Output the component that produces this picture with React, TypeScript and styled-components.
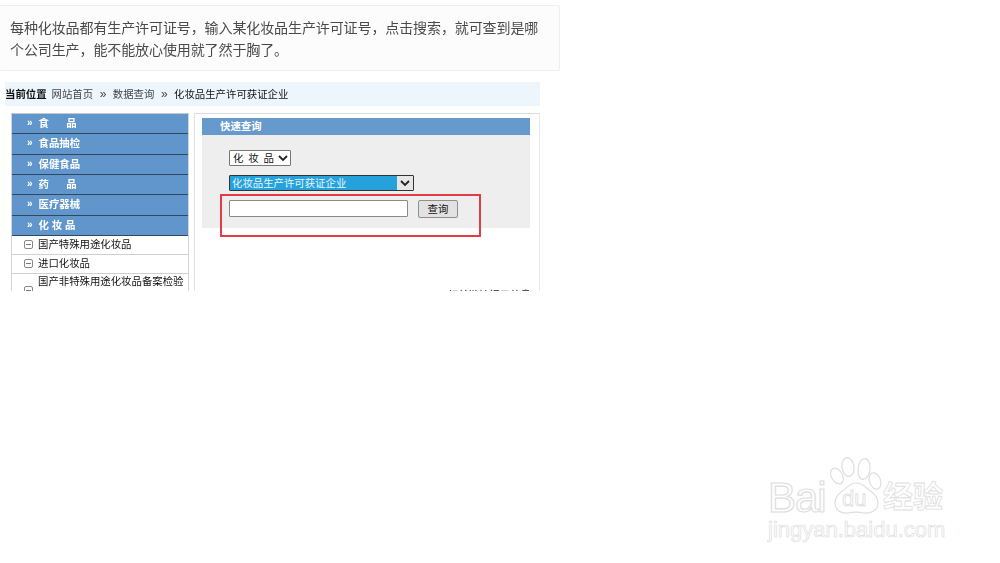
import React from 'react';
import styled, { createGlobalStyle } from 'styled-components';

const GlobalStyle = createGlobalStyle`
    html, body {
        margin: 0;
        padding: 0;
        background: #fff;
    }
    body {
        font-family: "Liberation Sans", "Noto Sans CJK SC", sans-serif;
    }
`
const Page = styled.div`
    position: relative;
    width: 1000px;
    height: 563px;
    overflow: hidden;
    padding-top: 5px;
    box-sizing: border-box;
`
const Note = styled.div`
    width: 560px;
    height: 66px;
    box-sizing: border-box;
    padding: 12px 10px 0 10px;
    background: #fcfcfc;
    border: 1px solid #eeeeee;
    border-left: none;
    border-radius: 2px;
    color: #4a4a4a;
    font-size: 14px;
    line-height: 21.5px;
    letter-spacing: -0.1px;
    filter: blur(0.35px);
`
const Shot = styled.div`
    position: relative;
    width: 535px;
    height: 209px;
    margin: 11px 0 0 5px;
    overflow: hidden;
    font-size: 10.4px;
    filter: blur(0.4px);
`
const Crumbs = styled.div`
    display: flex;
    align-items: center;
    height: 24px;
    padding-bottom: 1px;
    box-sizing: border-box;
    background: #eef6fd;
    color: #444;
`
const CrumbLabel = styled.span`
    color: #111;
    font-weight: 700;
    margin-right: 5px;
`
const CrumbSep = styled.span`
    margin: 0 6.5px;
    font-size: 12px;
`
const CrumbCurrent = styled.span`
    color: #111;
`
const Columns = styled.div`
    display: flex;
    align-items: flex-start;
    height: 185px;
    padding: 7px 0 0 6px;
    box-sizing: border-box;
`
const Sidebar = styled.div`
    width: 178px;
    height: 178px;
    flex-shrink: 0;
    border-top: 1px solid #c8c8c8;
    border-left: 1px solid #d4d4d4;
    border-right: 1px solid #d4d4d4;
    box-sizing: border-box;
`
const NavHead = styled.div`
    display: flex;
    align-items: center;
    box-sizing: border-box;
    height: 20.33px;
    padding: 0 0 2px 15px;
    background: #6096cc;
    border-bottom: 1.5px solid #33485e;
    color: #fff;
    font-weight: 700;
    white-space: pre;
`
const Chevrons = styled.span`
    font-size: 10px;
    margin-right: 6px;
`
const NavItem = styled.div<{ $tall?: boolean }>`
    display: flex;
    align-items: center;
    gap: 5px;
    box-sizing: border-box;
    height: ${(props) => (props.$tall ? '34px' : '19px')};
    padding-left: 12px;
    border-bottom: 1.5px solid #d0d0d0;
    background: #fff;
    color: #111;
    line-height: 16px;
`
const PlusBox = styled.span`
    width: 7px;
    height: 7px;
    border: 1px solid #888;
    border-radius: 2px;
    flex-shrink: 0;
    display: flex;
    align-items: center;
    justify-content: center;
    &::before {
        content: '';
        width: 5px;
        height: 1px;
        background: #777;
    }
`
const Main = styled.div`
    width: 346px;
    height: 178px;
    margin-left: 5px;
    padding: 4px 9px 0 7px;
    box-sizing: border-box;
    border-top: 1px solid #dddddd;
    border-left: 1px solid #e2e2e2;
    border-right: 1px solid #e8e8e8;
    position: relative;
    flex-shrink: 0;
`
const PanelTitle = styled.div`
    display: flex;
    align-items: center;
    height: 17px;
    padding: 0 0 2px 18px;
    box-sizing: border-box;
    background: #6699cc;
    color: #fff;
    font-weight: 700;
`
const PanelBody = styled.div`
    height: 93px;
    padding: 15px 0 0 27px;
    box-sizing: border-box;
    background: #eeeeee;
`
const Field = styled.div<{ $width: number; $dark?: boolean }>`
    display: flex;
    align-items: center;
    justify-content: space-between;
    width: ${(props) => props.$width}px;
    height: 16px;
    box-sizing: border-box;
    background: #fff;
    border: 1px solid ${(props) => (props.$dark ? '#333' : '#777')};
    border-radius: 1px;
    color: #111;
    margin-bottom: 9px;
`
const FieldText = styled.span`
    padding: 0 0 1px 3px;
    letter-spacing: 1px;
    white-space: nowrap;
`
const SelectedText = styled.span`
    display: flex;
    align-items: center;
    flex: 1;
    height: 100%;
    padding: 0 0 1px 2px;
    box-sizing: border-box;
    background: #25a1dc;
    color: #e8f6fd;
    white-space: nowrap;
`
const Arrow = styled.svg<{ $shaded?: boolean }>`
    width: ${(props) => (props.$shaded ? 16 : 14)}px;
    height: 14px;
    flex-shrink: 0;
    background: ${(props) => (props.$shaded ? '#e6e6e6' : 'transparent')};
`
const SearchRow = styled.div`
    display: flex;
    align-items: flex-start;
    gap: 10px;
`
const SearchInput = styled.div`
    width: 179px;
    height: 17px;
    box-sizing: border-box;
    background: #fff;
    border: 1px solid #8a8a8a;
    border-radius: 1px;
`
const SearchButton = styled.div`
    display: flex;
    align-items: center;
    justify-content: center;
    width: 40px;
    height: 18px;
    padding-bottom: 1px;
    box-sizing: border-box;
    background: #e2e2e2;
    border: 1px solid #8f8f8f;
    border-radius: 2px;
    color: #111;
`
const Callout = styled.div`
    position: absolute;
    left: 25px;
    top: 79.5px;
    width: 261px;
    height: 43px;
    box-sizing: border-box;
    border: 2.5px solid #e53b46;
`
const Clipped = styled.div`
    position: absolute;
    right: 8px;
    top: 173px;
    color: #555;
    font-weight: 700;
`
const Watermark = styled.div`
    position: absolute;
    left: 767px;
    top: 455px;
    width: 185px;
    height: 90px;
`
const Paw = styled.svg`
    position: absolute;
    left: 63px;
    top: 2px;
    width: 52px;
    height: 58px;
`
const WmBrand = styled.span`
    position: absolute;
    left: 1px;
    top: 21px;
    font-size: 42px;
    line-height: 44px;
    letter-spacing: -1px;
    color: #fff;
    -webkit-text-stroke: 1.2px #dedede;
`
const WmDu = styled.span`
    position: absolute;
    left: 75px;
    top: 31px;
    font-size: 22px;
    line-height: 26px;
    color: #fff;
    -webkit-text-stroke: 0.8px #dedede;
`
const WmCn = styled.span`
    position: absolute;
    left: 116px;
    top: 26px;
    font-size: 30px;
    line-height: 32px;
    font-weight: 700;
    color: #fff;
    -webkit-text-stroke: 0.8px #dedede;
    white-space: nowrap;
`
const WmUrl = styled.span`
    position: absolute;
    left: 1px;
    top: 62px;
    font-size: 22px;
    line-height: 26px;
    color: #fff;
    -webkit-text-stroke: 0.7px #dedede;
    white-space: nowrap;
`

const navHeads = ['食      品', '食品抽检', '保健食品', '药      品', '医疗器械', '化 妆 品'];

const ChevronDown: React.FC<{ shaded?: boolean }> = ({ shaded }) => (
    <Arrow $shaded={shaded} viewBox={shaded ? '0 0 16 14' : '0 0 14 14'}>
        <path d={shaded ? 'M4 5l4 4 4-4' : 'M3 5l4 4 4-4'} fill="none" stroke="#222" strokeWidth="1.8" />
    </Arrow>
);

const App: React.FC = () => {
    return (
        <Page>
            <GlobalStyle />
            <Note>
                每种化妆品都有生产许可证号，输入某化妆品生产许可证号，点击搜索，就可查到是哪个公司生产，能不能放心使用就了然于胸了。
            </Note>
            <Shot>
                <Crumbs>
                    <CrumbLabel>当前位置</CrumbLabel>
                    网站首页
                    <CrumbSep>»</CrumbSep>
                    数据查询
                    <CrumbSep>»</CrumbSep>
                    <CrumbCurrent>化妆品生产许可获证企业</CrumbCurrent>
                </Crumbs>
                <Columns>
                    <Sidebar>
                        {navHeads.map((name) => (
                            <NavHead key={name}>
                                <Chevrons>»</Chevrons>
                                {name}
                            </NavHead>
                        ))}
                        <NavItem><PlusBox />国产特殊用途化妆品</NavItem>
                        <NavItem><PlusBox />进口化妆品</NavItem>
                        <NavItem $tall><PlusBox />国产非特殊用途化妆品备案检验机构</NavItem>
                    </Sidebar>
                    <Main>
                        <PanelTitle>快速查询</PanelTitle>
                        <PanelBody>
                            <Field $width={62}>
                                <FieldText>化 妆 品</FieldText>
                                <ChevronDown />
                            </Field>
                            <Field $width={185} $dark>
                                <SelectedText>化妆品生产许可获证企业</SelectedText>
                                <ChevronDown shaded />
                            </Field>
                            <SearchRow>
                                <SearchInput />
                                <SearchButton>查询</SearchButton>
                            </SearchRow>
                        </PanelBody>
                        <Callout />
                        <Clipped>相关链接提示信息</Clipped>
                    </Main>
                </Columns>
            </Shot>
            <Watermark>
                <Paw viewBox="0 0 52 58">
                    <g fill="#fff" stroke="#dedede" strokeWidth="1.2">
                        <ellipse cx="7" cy="19" rx="5.5" ry="8.5" transform="rotate(-30 7 19)" />
                        <ellipse cx="18" cy="10" rx="6" ry="9.5" transform="rotate(-8 18 10)" />
                        <ellipse cx="34" cy="12" rx="6" ry="10.5" transform="rotate(6 34 12)" />
                        <ellipse cx="45" cy="24" rx="5.5" ry="8.5" transform="rotate(-20 45 24)" />
                        <path d="M26 26c-6 0-9 4-12 7-5 3-9 7-9 13 0 7 6 11 13 10 5-1 11-1 16 0 7 1 14-3 14-10 0-6-4-10-9-13-3-3-7-7-13-7z" />
                    </g>
                </Paw>
                <WmBrand>Bai</WmBrand>
                <WmDu>du</WmDu>
                <WmCn>经验</WmCn>
                <WmUrl>jingyan.baidu.com</WmUrl>
            </Watermark>
        </Page>
    );
};

export default App;
